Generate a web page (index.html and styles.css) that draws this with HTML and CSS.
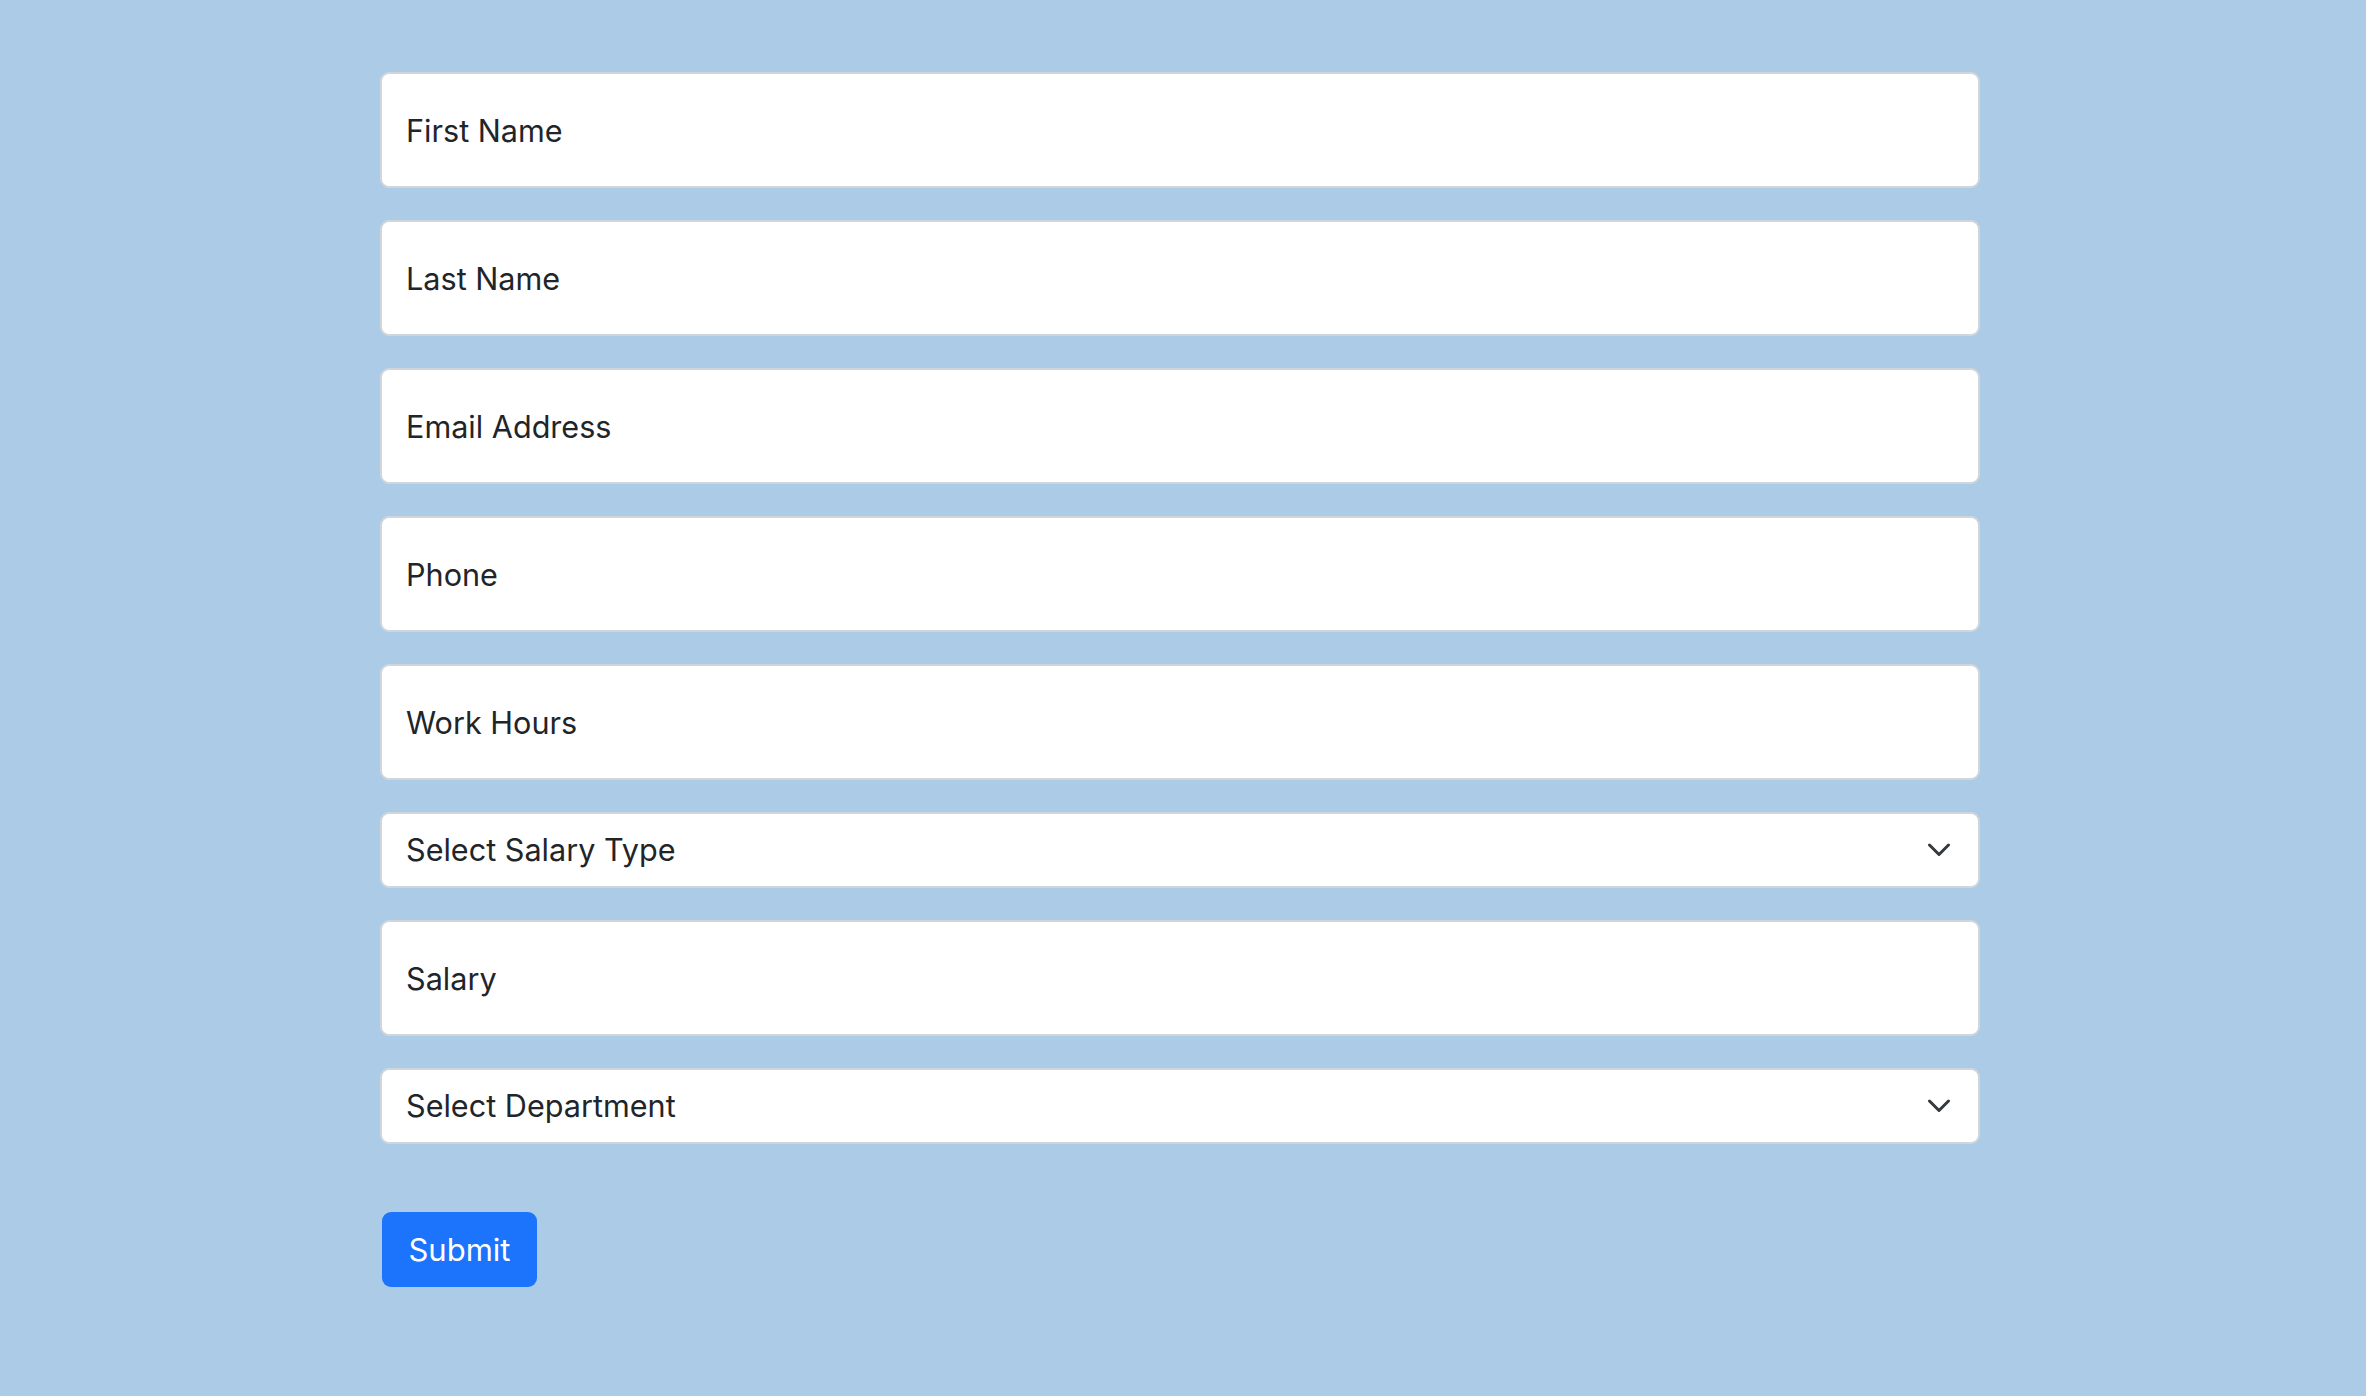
FILE: index.html
```html
<!DOCTYPE html>
<html lang="en">
<head>
<meta charset="utf-8">
<title>Employee Form</title>
<link rel="stylesheet" href="styles.css">
</head>
<body>
<form class="form">
  <div class="field">First Name</div>
  <div class="field">Last Name</div>
  <div class="field">Email Address</div>
  <div class="field">Phone</div>
  <div class="field">Work Hours</div>
  <div class="field select"><span>Select Salary Type</span><svg class="chev" width="24" height="14" viewBox="0 0 24 14"><path d="M2.5 2 L12 11.5 L21.5 2" fill="none" stroke="#343a40" stroke-width="3" stroke-linecap="round" stroke-linejoin="round"/></svg></div>
  <div class="field">Salary</div>
  <div class="field select"><span>Select Department</span><svg class="chev" width="24" height="14" viewBox="0 0 24 14"><path d="M2.5 2 L12 11.5 L21.5 2" fill="none" stroke="#343a40" stroke-width="3" stroke-linecap="round" stroke-linejoin="round"/></svg></div>
  <div class="actions"><button type="button" class="btn">Submit</button></div>
</form>
</body>
</html>
```

FILE: styles.css
```css
html, body {
  margin: 0;
  padding: 0;
}
body {
  background: #accbe7;
  font-family: Inter, "Noto Sans", "Liberation Sans", sans-serif;
  color: #212529;
  min-height: 1396px;
}
.form {
  display: flex;
  flex-direction: column;
  gap: 32px;
  width: 1600px;
  margin-left: 380px;
  padding-top: 72px;
}
.field {
  box-sizing: border-box;
  height: 116px;
  background: #fff;
  border: 2px solid #d1d6dc;
  border-radius: 9px;
  padding: 2px 27px 0 24px;
  display: flex;
  align-items: center;
  font-size: 30.6px;
  line-height: 1;
}
.field.select {
  height: 76px;
  padding-top: 0;
  justify-content: space-between;
}
.chev {
  display: block;
}
.actions {
  margin-top: 36px;
}
.btn {
  box-sizing: border-box;
  width: 155px;
  height: 75px;
  margin-left: 2px;
  background: #1c73fc;
  color: #fff;
  border: none;
  border-radius: 9px;
  font-family: Inter, "Noto Sans", "Liberation Sans", sans-serif;
  font-size: 31px;
  padding: 0;
}
```
